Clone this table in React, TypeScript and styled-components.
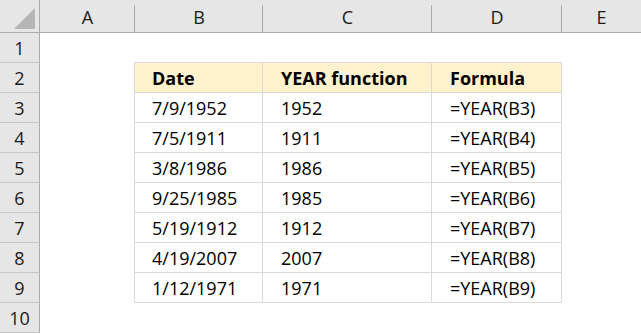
import React from 'react'
import styled, { createGlobalStyle } from 'styled-components'

const GlobalStyle = createGlobalStyle`
  html, body {
    margin: 0;
    padding: 0;
    background: #ffffff;
    overflow: hidden;
  }
  body {
    font-family: 'Open Sans', 'Liberation Sans', sans-serif;
  }
`

const HEADER_BG = '#e6e6e6'
const HEADER_LINE = '#ababab'
const CELL_LINE = '#d9d9d9'
const TITLE_FILL = '#fff2cc'

const Sheet = styled.div`
  display: grid;
  grid-template-columns: 40px 95px 128px 169px 130px 79px;
  grid-template-rows: 33px repeat(10, 30px);
  width: 641px;
  height: 334px;
  overflow: hidden;
`

const Corner = styled.div`
  background: ${HEADER_BG};
  border-right: 1px solid ${HEADER_LINE};
  border-bottom: 1px solid ${HEADER_LINE};
  box-sizing: border-box;
  position: relative;
`

const CornerTriangle = styled.div`
  position: absolute;
  right: 4px;
  bottom: 3px;
  width: 0;
  height: 0;
  border-left: 21px solid transparent;
  border-bottom: 21px solid #b5b5b5;
`

const ColHead = styled.div<{ last?: boolean }>`
  background: ${HEADER_BG};
  border-bottom: 1px solid ${HEADER_LINE};
  box-sizing: border-box;
  display: flex;
  align-items: center;
  justify-content: center;
  font-size: 18px;
  color: #1a1a1a;
  position: relative;
  padding-top: 2px;

  &::after {
    content: '';
    display: ${p => (p.last ? 'none' : 'block')};
    position: absolute;
    right: 0;
    top: 5px;
    bottom: 0;
    width: 1px;
    background: ${HEADER_LINE};
  }
`

const RowHead = styled.div`
  background: ${HEADER_BG};
  border-right: 1px solid ${HEADER_LINE};
  border-bottom: 1px solid #c6c6c6;
  box-sizing: border-box;
  display: flex;
  align-items: center;
  justify-content: center;
  font-size: 18px;
  color: #1a1a1a;
  padding-top: 1px;
`

const Cell = styled.div<{ boxed?: boolean; title?: boolean; first?: boolean; top?: boolean }>`
  box-sizing: border-box;
  display: flex;
  align-items: center;
  padding-left: ${p => (p.first ? 17 : 18)}px;
  padding-top: 1px;
  font-size: 18px;
  color: #000;
  white-space: nowrap;
  background: ${p => (p.title ? TITLE_FILL : '#fff')};
  font-weight: ${p => (p.title ? 700 : 400)};
  border-right: ${p => (p.boxed ? `1px solid ${CELL_LINE}` : 'none')};
  border-bottom: ${p => (p.boxed ? `1px solid ${CELL_LINE}` : 'none')};
  border-left: ${p => (p.boxed && p.first ? `1px solid ${CELL_LINE}` : 'none')};
  border-top: ${p => (p.boxed && p.top ? `1px solid ${CELL_LINE}` : 'none')};
  margin-top: ${p => (p.boxed && p.top ? '-1px' : '0')};
  margin-left: ${p => (p.boxed && p.first ? '-1px' : '0')};
`

const columns = ['A', 'B', 'C', 'D', 'E']

const rows = [
  ['7/9/1952', '1952'],
  ['7/5/1911', '1911'],
  ['3/8/1986', '1986'],
  ['9/25/1985', '1985'],
  ['5/19/1912', '1912'],
  ['4/19/2007', '2007'],
  ['1/12/1971', '1971'],
]

const App: React.FC = () => {
  const body: React.ReactNode[] = []

  for (let r = 1; r <= 10; r++) {
    body.push(<RowHead key={`h${r}`}>{r}</RowHead>)
    const inTable = r >= 2 && r <= 9
    const values =
      r === 2
        ? ['Date', 'YEAR function', 'Formula']
        : inTable
        ? [rows[r - 3][0], rows[r - 3][1], `=YEAR(B${r})`]
        : ['', '', '']

    // column A
    body.push(<Cell key={`a${r}`} />)
    values.forEach((v, i) => (
      body.push(
        <Cell
          key={`c${r}-${i}`}
          boxed={inTable}
          title={r === 2}
          first={i === 0}
          top={r === 2}
        >
          {v}
        </Cell>
      )
    ))
    // column E
    body.push(<Cell key={`e${r}`} />)
  }

  return (
    <>
      <GlobalStyle />
      <Sheet>
        <Corner>
          <CornerTriangle />
        </Corner>
        {columns.map((c, i) => (
          <ColHead key={c} last={i === columns.length - 1}>{c}</ColHead>
        ))}
        {body}
      </Sheet>
    </>
  )
}

export default App
